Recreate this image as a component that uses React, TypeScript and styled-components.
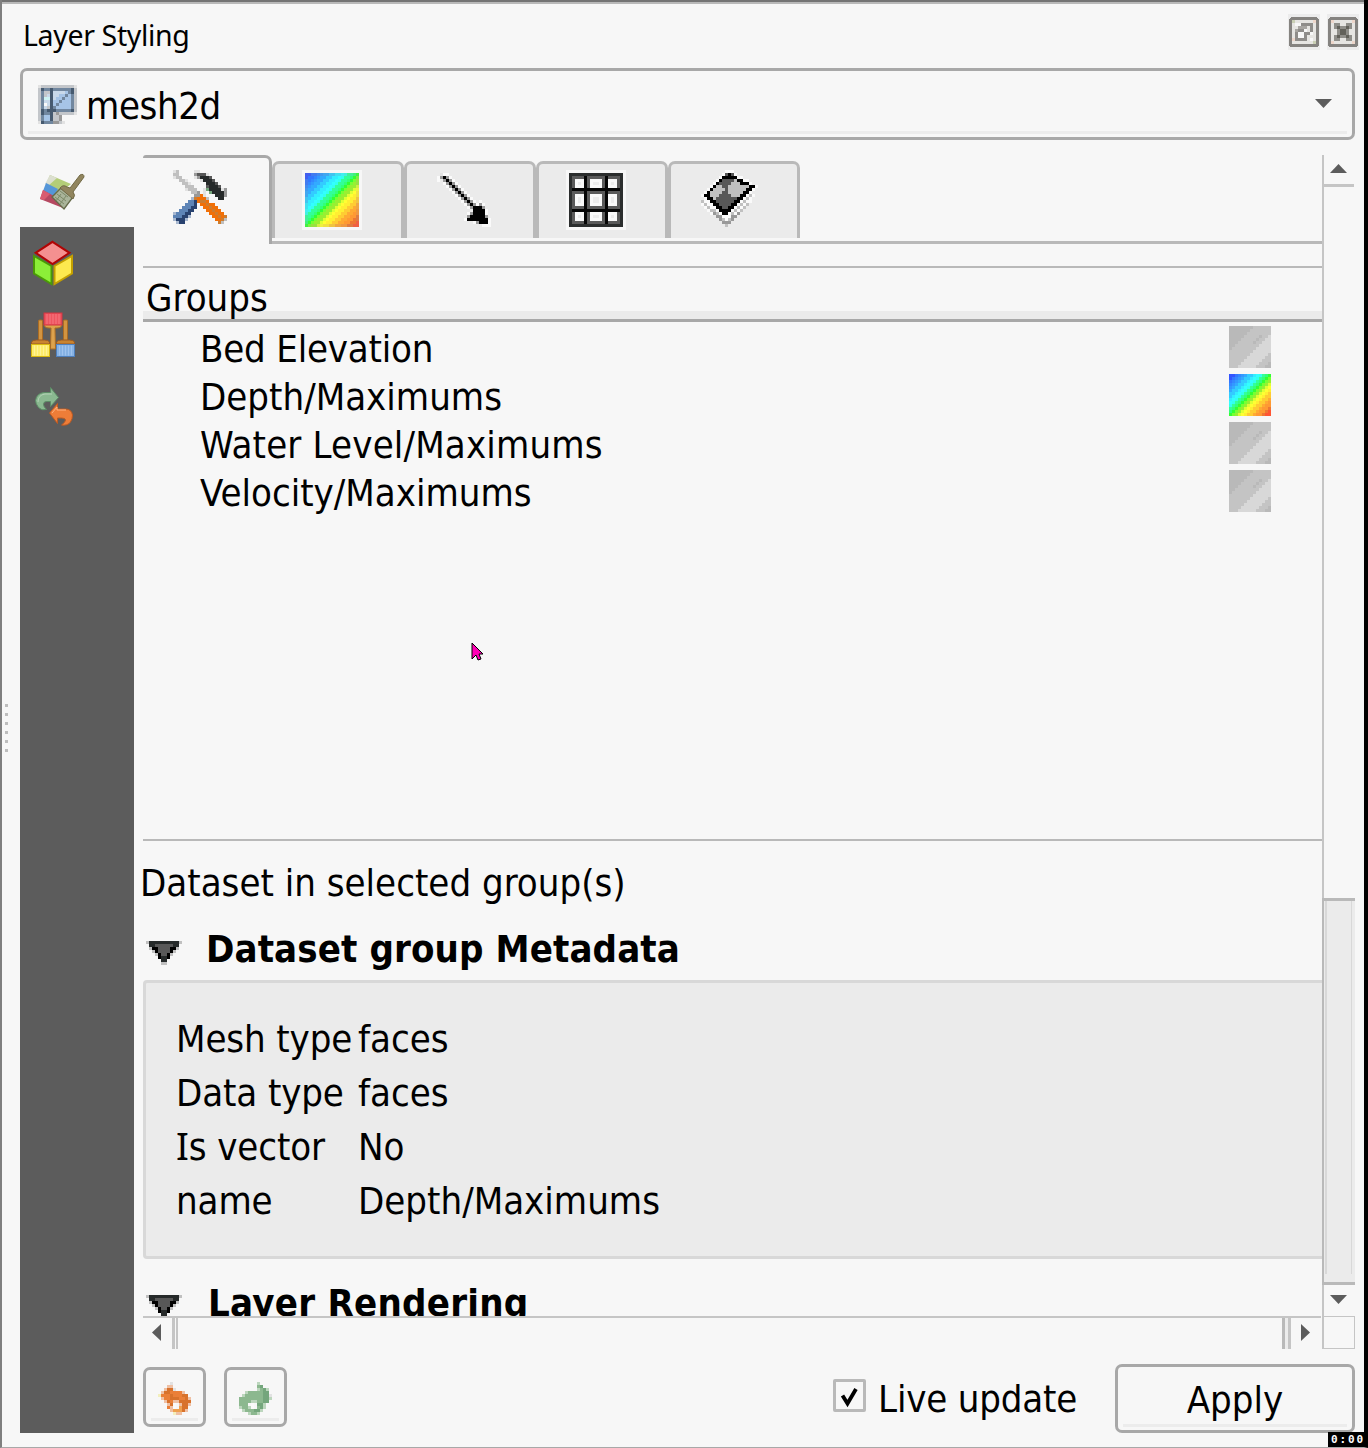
import React from "react";
import styled, { createGlobalStyle } from "styled-components";

const UI = `"DejaVu Sans Condensed", "DejaVu Sans", "Liberation Sans", sans-serif`;

const GlobalStyle = createGlobalStyle`
  * { box-sizing: border-box; }
  body { margin: 0; background: #f7f7f7; color: #000; }
`;

const Window = styled.div`
  width: 1368px;
  height: 1448px;
  display: flex;
  flex-direction: column;
  position: relative;
  overflow: hidden;
  background: #f7f7f7;
  border-left: 2px solid #7f7f7f;
  border-right: 4px solid #000;
  border-bottom: 1px solid #a8a8a8;
  font: 38px/48px ${UI};
  white-space: nowrap;
`;

const TopEdge = styled.div`
  height: 4px;
  flex: none;
  background: #b9b9b9;
  border-top: 2px solid #747474;
`;

const TitleBar = styled.header`
  height: 64px;
  flex: none;
  display: flex;
  align-items: center;
  padding: 0 5px 8px 21px;
`;

const Title = styled.h1`
  flex: 1;
  margin: 0;
  padding-top: 6px;
  font: 400 28.5px/40px "Noto Sans", "Open Sans", sans-serif;
  letter-spacing: -0.35px;
`;

const TitleButton = styled.button`
  width: 32px;
  height: 38px;
  margin-left: 7px;
  padding: 0;
  border: 0;
  background: none;
  svg { display: block; }
`;

const Bevel = styled.span`
  height: 3px;
  flex: none;
  margin: 0 5px;
  align-self: stretch;
  background: #ececec;
`;

const Combo = styled.div`
  width: 1335px;
  height: 72px;
  flex: none;
  margin-left: 18px;
  padding-bottom: 3px;
  border: 3px solid #a8a8a8;
  border-radius: 7px;
  display: flex;
  flex-direction: column;
`;

const ComboValue = styled.div`
  flex: 1;
  display: flex;
  align-items: center;
  padding: 4px 20px 0 15px;
  svg:first-child { margin-right: 9px; margin-top: 2px; }
  svg:last-child { margin-left: auto; margin-top: 1px; }
`;

const ComboText = styled.span`
  padding-top: 5px;
  letter-spacing: -0.4px;
`;

const Body = styled.div`
  flex: 1;
  min-height: 0;
  display: flex;
  padding: 15px 9px 0 0;
`;

const Splitter = styled.div`
  width: 18px;
  flex: none;
  display: flex;
  flex-direction: column;
  gap: 6px;
  padding: 549px 0 0 3px;
`;

const Dot = styled.i`
  width: 3px;
  height: 3px;
  background: #bdbdbd;
`;

const Sidebar = styled.nav`
  width: 114px;
  flex: none;
  height: 1278px;
  display: flex;
  flex-direction: column;
  background: #5c5c5c;
`;

const SidebarItem = styled.div<{ $active?: boolean }>`
  height: 72px;
  padding: ${(p) => (p.$active ? "16px 0 0 18px" : "12px 0 0 9px")};
  background: ${(p) => (p.$active ? "#f7f7f7" : "transparent")};
  svg { display: block; }
`;

const Main = styled.main`
  width: 1221px;
  flex: none;
  display: flex;
  flex-direction: column;
`;

const Viewport = styled.div`
  height: 1161px;
  flex: none;
  display: flex;
`;

const Content = styled.div`
  width: 1188px;
  flex: none;
  padding-left: 9px;
  overflow: hidden;
`;

const TabStrip = styled.div`
  display: flex;
  align-items: flex-end;
  height: 83px;
`;

const Tab = styled.div<{ $icon: number }>`
  width: 132px;
  height: 77px;
  padding: 6px 0 0 ${(p) => p.$icon}px;
  background: #ebebeb;
  border: 3px solid #b9b9b9;
  border-bottom: 0;
  border-radius: 7px 7px 0 0;
  svg { display: block; }
`;

const ActiveTab = styled.div`
  width: 129px;
  height: 89px;
  margin-bottom: -6px;
  padding: 12px 0 0 30px;
  border: 3px solid #a8a8a8;
  border-width: 3px 3px 0 0;
  border-radius: 3px 7px 0 0;
  svg { display: block; }
`;

const TabBase = styled.div`
  height: 6px;
  margin-left: 128px;
  border-bottom: 3px solid #b9b9b9;
`;

const Tree = styled.section`
  height: 575px;
  margin-top: 22px;
  border: 2px solid #b9b9b9;
  border-width: 2px 0;
`;

const TreeHeader = styled.div`
  height: 54px;
  padding: 6px 0 0 3px;
  line-height: 48px;
  background: linear-gradient(#f7f7f7 43px, #ebebeb 43px);
  border-bottom: 3px solid #a8a8a8;
`;

const TreeRow = styled.div`
  height: 48px;
  display: flex;
  align-items: center;
  justify-content: space-between;
  padding: 1px 51px 0 57px;
  svg { display: block; }
`;

const TreeLabel = styled.span<{ $spacing?: number }>`
  padding-top: 4px;
  letter-spacing: ${(p) => p.$spacing ?? 0}px;
`;

const SectionLabel = styled.div`
  height: 83px;
  padding-top: 18px;
  margin-left: -3px;
`;

const GroupTitle = styled.h2<{ $top: number; $gap: number; $spacing: number }>`
  height: 56px;
  margin: 0;
  padding-top: ${(p) => p.$top}px;
  display: flex;
  align-items: flex-start;
  gap: ${(p) => p.$gap}px;
  padding-left: 3px;
  font: 700 38px/48px ${UI};
  letter-spacing: ${(p) => p.$spacing}px;
  svg { margin-top: 16px; flex: none; }
`;

const GroupBox = styled.div`
  height: 279px;
  padding: 32px 30px 0;
  background: #ebebeb;
  border: 3px solid #d8d8d8;
  border-right: 0;
  border-radius: 4px 0 0 4px;
`;

const Meta = styled.dl`
  margin: 0;
  display: grid;
  grid-template-columns: 182px 1fr;
  grid-auto-rows: 54px;
`;

const MetaName = styled.dt`
  letter-spacing: -0.12px;
`;

const MetaValue = styled.dd`
  margin: 0;
`;

const SlabI = styled.span`
  font-family: "Noto Sans", sans-serif;
  line-height: 1px;
`;

const VScroll = styled.div`
  width: 33px;
  flex: none;
  display: flex;
  flex-direction: column;
  border-left: 2px solid #c5c5c5;
`;

const VButton = styled.div<{ $end?: boolean }>`
  height: ${(p) => (p.$end ? 31 : 32)}px;
  flex: none;
  margin-right: 1px;
  padding: ${(p) => (p.$end ? 10 : 9)}px 0 0 6px;
  border-bottom: ${(p) => (p.$end ? "0" : "3px solid #c5c5c5")};
  svg { display: block; }
`;

const VTrack = styled.div`
  flex: 1;
`;

const VThumb = styled.div`
  height: 387px;
  flex: none;
  margin-left: -2px;
  display: flex;
  padding-bottom: 8px;
  background: #ebebeb;
  border: solid #b9b9b9;
  border-width: 3px 0 3px 2px;
  &::before {
    content: "";
    flex: 1;
    margin: 0 3px 0 1px;
    border: solid #d8d8d8;
    border-width: 0 1px 0 2px;
  }
`;

const HScroll = styled.div`
  height: 33px;
  flex: none;
  margin-left: 9px;
  display: flex;
`;

const HTrack = styled.div`
  width: 1178px;
  display: flex;
  justify-content: space-between;
  border-top: 2px solid #c5c5c5;
`;

const HButton = styled.div<{ $end?: boolean }>`
  display: flex;
  width: ${(p) => (p.$end ? 39 : 35)}px;
  padding: 6px 0 0 ${(p) => (p.$end ? 16 : 9)}px;
  border: solid #c5c5c5;
  border-width: 0;
  ${(p) =>
    p.$end
      ? "border-left: 3px solid #b9b9b9; background: linear-gradient(90deg, #ececec 3px, #c5c5c5 3px, #c5c5c5 6px, transparent 6px);"
      : "background: linear-gradient(90deg, transparent 29px, #c5c5c5 29px, #c5c5c5 32px, #f7f7f7 32px, #f7f7f7 33px, #c5c5c5 33px);"}
`;

const Corner = styled.div`
  width: 33px;
  height: 33px;
  margin-left: 1px;
  border: solid #c5c5c5;
  border-width: 1px 1px 1px 2px;
`;

const Footer = styled.footer`
  height: 98px;
  flex: none;
  display: flex;
  align-items: flex-start;
  padding: 15px 0 0 9px;
`;

const Button = styled.button<{ $width: number; $height: number }>`
  width: ${(p) => p.$width}px;
  height: ${(p) => p.$height}px;
  margin: ${(p) => (p.$width < 100 ? "3px 18px 0 0" : "0")};
  padding: 0 0 3px;
  display: flex;
  flex-direction: column;
  align-items: center;
  background: #f7f7f7;
  color: #000;
  border: 3px solid #a8a8a8;
  border-radius: 7px;
  font: 38px/48px ${UI};
`;

const ButtonFace = styled.span`
  flex: 1;
  display: flex;
  align-items: center;
  padding-top: 9px;
`;

const Check = styled.label`
  display: flex;
  align-items: center;
  gap: 12px;
  margin: 8px 38px 0 auto;
`;

const CheckBox = styled.span`
  width: 33px;
  height: 33px;
  margin-top: -4px;
  border: 3px solid #b9b9b9;
  border-radius: 2px;
  svg { display: block; }
`;

const CheckLabel = styled.span`
  padding-top: 3px;
  letter-spacing: -0.2px;
`;

const Pointer = styled.div`
  position: absolute;
  left: 469px;
  top: 642px;
  svg { display: block; }
`;

const Timer = styled.div`
  position: absolute;
  right: -4px;
  bottom: -1px;
  width: 40px;
  height: 16px;
  padding-left: 3px;
  background: #000;
  color: #fff;
  font: 700 11px/15px "DejaVu Sans Mono", monospace;
  letter-spacing: 1.9px;
`;

/* ---------- pixel icons ---------- */

type Paint = (x: number, y: number) => string | null;

function Pixels({ w, h, paint, size = 3 }: { w: number; h: number; paint: Paint; size?: number }) {
  const cells: React.ReactNode[] = [];
  for (let y = 0; y < h; y++)
    for (let x = 0; x < w; x++) {
      const c = paint(x, y);
      if (c) cells.push(<rect key={`${x}-${y}`} x={x} y={y} width={1} height={1} fill={c} />);
    }
  return (
    <svg width={w * size} height={h * size} viewBox={`0 0 ${w} ${h}`} shapeRendering="crispEdges">
      {cells}
    </svg>
  );
}

const PALETTE: Record<string, string> = {
  g: "#c0c0c0", l: "#e2e2e2", w: "#fafafa", s: "#999999", d: "#585858", k: "#262a2a",
  K: "#000000", o: "#f07008", p: "#cc7d30", b: "#5d84b6", n: "#28426f", m: "#a8b8d0",
  O: "#ea7f38", P: "#d8722c", q: "#efc0a4", y: "#f3efbd", Y: "#eea04f",
  G: "#8cb88f", H: "#74a67c", h: "#bcd6bd", c: "#c9d9ea", e: "#71879f", f: "#465a70",
  t: "#cdf3f3", v: "#a6c4e6", x: "#c3c6ca",
};

function Bitmap({ rows }: { rows: string[] }) {
  return <Pixels w={rows[0].length} h={rows.length} paint={(x, y) => PALETTE[rows[y][x]] ?? null} />;
}

const TOOLS = [
  "lg.....ll.........",
  "gg.....sdddl......",
  "lgg....lskkkd.....",
  "..ggl....lkkkd....",
  "...ggl.....kkkd...",
  "....ggg....dkkkd..",
  "....lggg..lHkkkkls",
  "......ggs.l.Hkkkks",
  ".......ssol...kkks",
  "......mpooog...kk.",
  ".....bbnoppo......",
  "....bbbn.oopoo....",
  "...bbbnn..oopoo...",
  "..bbbnn....oopoo..",
  "mbbbnn......oopoo.",
  "bbbnnm.......oopop",
  "mnnnm.........oopg",
  ".mnn...........pg.",
];

const ARROW = [
  "..................",
  ".lww..............",
  "wsKsw.............",
  "w.sKsw............",
  "..wsKsw...........",
  "...wsKsw..........",
  "....wsKsw.........",
  ".....wsKsw........",
  "......wsKsw.......",
  ".......wsKsw......",
  "........wsKsw.w...",
  ".........wsKswsw..",
  "..........wsKKKs..",
  "............KKKKw.",
  "..........wsKKKKw.",
  "..........sKKKKKs.",
  ".........wKKKKKKKw",
  "............wsKKKw",
  "...............www",
];

const MESH = [
  "lxxxxxxxxxxxl",
  "xfeefeeeeeefx",
  "xexxfccccvefx",
  "xexcfccvvevex",
  "xettfcvvevvex",
  "xeccfvvevvvex",
  "xewcfvevvvvex",
  "xecxfevvvvvex",
  "xfefffeeeeefx",
  "xfeefxsxxxxxl",
  "xevvfxxs.....",
  "xevvfxxs.....",
  "lfeeessxl....",
];

const UNDO = [
  "....l......",
  "...qq......",
  "..qPPl.....",
  ".qPPOOOOq..",
  "yOOOPOOOPP.",
  ".qOOPPPOOPq",
  "..qPOqqPPPP",
  "...qPw.qPPq",
  "...Oqw.YPP.",
  "....qYYYPq.",
  ".....yqq...",
];

const REDO = [
  "......h....",
  "......GH...",
  "......hGHh.",
  "..hGGGGGHH.",
  ".hGGGGGGHHl",
  "GGGGGGGGHHh",
  "GGGGhhGGHH.",
  "GGG.w.HHh..",
  "hGGhw.GHh..",
  ".hGGGHHh...",
  "...hGGh....",
];

const CONTOUR = [
  ".........www........",
  "........wdKdw.......",
  ".......wKKKKKww.....",
  "......wKddddgKKww...",
  ".....wKddddgggKKKw..",
  "....wKggddgggggggKKw",
  "...wKggggdggggggKKw.",
  "..wKggggddgggggKKw..",
  ".wKKgggddddgggKKwgw.",
  "..wKKgdddddddKKwgw..",
  ".gwwKKddddddKKwgww..",
  ".wgwwKKddddKKwgwg...",
  "..wgwwKKddKKwgwg....",
  "...wggwKKKKwgwg.....",
  "....wsgwKKwgws......",
  "......sswwwss.......",
  ".......sgwgs........",
  "........sss.........",
  ".........g..........",
  "....................",
];

const COLLAPSE = [
  "gkkkkkkkkkkg",
  ".kkddddddkk.",
  ".gKKddddKKg.",
  "..gKddddKg..",
  "...gKddKg...",
  "....KkkK....",
  ".....kk.....",
  ".....gg.....",
];

const RAMP = [
  "#3355ff", "#3355ff", "#3377ff", "#3388ff", "#3399ff", "#33aaff", "#33ccff", "#33ccff", "#33eeff",
  "#33ffff", "#33ffee", "#33ff99", "#33ff77", "#33ff33", "#77ff33", "#99ee33", "#ddff33", "#ffff33",
  "#ffee33", "#ffcc33", "#ffcc33", "#ffaa33", "#ff9933", "#ff9933", "#ee7733", "#ff5533", "#ff5533",
];

const rampSwatch: Paint = (x, y) => RAMP[x + y];

const rampTab: Paint = (x, y) => {
  if (x === 0 || y === 0 || x === 19 || y === 19) return "#f7f7f7";
  const i = Math.max(0, Math.min(26, Math.round(((x + y - 2) * 26) / 34)));
  const c = RAMP[i];
  if (x === 1 || y === 1 || x === 18 || y === 18)
    return `color-mix(in srgb, ${c} 84%, #999999)`;
  return c;
};

const graySwatch: Paint = (x, y) => {
  const d = x + y;
  if ((x === 10 && y === 3) || (x === 9 && y === 4) || (x === 8 && y === 5)) return "#b9b9b9";
  if (d <= 7) return "#b9b9b9";
  if (d < 16) return "#c4c4c4";
  if (d < 22) return "#d8d8d8";
  if (d < 25) return "#c4c4c4";
  return "#b9b9b9";
};

const gridTab: Paint = (x, y) => {
  const on = (...v: number[]) => v.includes(x) || v.includes(y);
  if (on(0, 19)) return "#f7f7f7";
  if (on(1, 18)) return "#2b2d2d";
  if (on(6, 13)) return "#060606";
  if (on(2, 7, 12, 17)) return "#5a5a5a";
  const mid = (v: number) => v === 4 || v === 9 || v === 10 || v === 15;
  return mid(x) && mid(y) ? "#ececec" : "#f9f9f9";
};

function Triangle({ dir }: { dir: "up" | "down" | "left" | "right" }) {
  const flat = dir === "up" || dir === "down";
  const points = { up: "0,9 8.5,0 17,9", down: "0,0 17,0 8.5,9", left: "9,0 9,17 0,8.5", right: "0,0 9,8.5 0,17" }[dir];
  return (
    <svg width={flat ? 17 : 9} height={flat ? 9 : 17}>
      <polygon points={points} fill="#5c5c5c" />
    </svg>
  );
}

function FloatIcon() {
  return (
    <svg width="32" height="38" viewBox="0 0 32 38" shapeRendering="crispEdges">
      <rect x="0" y="1" width="32" height="36" fill="#ececec" />
      <rect x="2.5" y="5.5" width="27" height="27" rx="2" fill="#e6e5e2" stroke="#858380" strokeWidth="3" />
      <path d="M7 10h6v3H7zM22 25h3v3h-3zM22 19h3v3h-3z" fill="#f7f7f7" />
      <path d="M4 7h3v3H4zM25 28h3v3h-3z" fill="#c9cfb4" />
      <path d="M25 7h3v3h-3zM4 25h3v3H4z" fill="#edd6ca" />
      <path d="M13 10h12v9h-3v3h-3v-3h3v-6h-9z" fill="#8f8d8a" />
      <path d="M10 13h9v3h-9z" fill="#a8a6a2" />
      <rect x="8.5" y="17.5" width="9" height="9" fill="#f7f7f7" stroke="#8f8d8a" strokeWidth="3" />
      <path d="M16 16h3v3h-3z" fill="#f7f7f7" />
      <path d="M7 16h3v3H7z" fill="#a8a6a2" />
    </svg>
  );
}

function CloseIcon() {
  return (
    <svg width="32" height="38" viewBox="0 0 32 38" shapeRendering="crispEdges">
      <rect x="0" y="1" width="32" height="36" fill="#ececec" />
      <rect x="2.5" y="5.5" width="27" height="27" rx="2" fill="#e6e5e2" stroke="#858380" strokeWidth="3" />
      <path d="M4 7h3v3H4zM25 7h3v3h-3zM25 28h3v3h-3zM4 28h3v3H4z" fill="#edd6ca" />
      <path d="M7 10h6v3h6v-3h6v6h-3v6h3v6h-6v-3h-6v3H7v-6h3v-6H7z" fill="#8f8e89" />
      <path d="M10 13h3v3h6v-3h3v3h-3v6h3v3h-3v-3h-6v3h-3v-3h3v-6h-3z" fill="#62615a" />
    </svg>
  );
}

function BrushIcon() {
  return (
    <svg width="48" height="42" viewBox="38 171 48 42">
      <path d="M50 175l21 9-15 12-10-12z" fill="#b3cd77" />
      <path d="M50 175l7 3-9 8-3-2z" fill="#dcdfd0" />
      <path d="M46 183l12 6-5 8-10-6z" fill="#5596d8" />
      <path d="M43 190l11 6 9 12-23-9z" fill="#b64861" />
      <path d="M43 190l7 4-6 6-4-1z" fill="#d95c70" />
      <path d="M52 197l9-9 12 9-9 12z" fill="#aab49a" stroke="#656a4a" strokeWidth="1.4" />
      <path d="M55 197l9 7M57 194l9 7M60 191l8 6M56 201l5-7M60 204l6-8" stroke="#7d8a68" strokeWidth="1" />
      <path d="M60 188q3-4 7-1l3 1 10-13q4-2 4 2L73 192q3 3 0 7z" fill="#91855e" stroke="#716945" strokeWidth="1" />
    </svg>
  );
}

function CubeIcon() {
  return (
    <svg width="48" height="48" viewBox="29 239 48 48">
      <path d="M52.500 241.800L69.500 252.800 52.500 264 35.700 252.800z" fill="#f49090" stroke="#b00404" strokeWidth="2" />
      <path d="M34 256l17.500 10v18L34 273.500z" fill="#8cee38" stroke="#4a9a06" strokeWidth="2" />
      <path d="M54.500 266L72 256v17.500L54.500 284z" fill="#fde94f" stroke="#c4a000" strokeWidth="2" />
    </svg>
  );
}

function BrushesIcon() {
  const bristles = (x: number, y: number, fill: string, line: string, top: string) => (
    <g>
      <rect x={x} y={y} width="18" height="12" fill={fill} stroke={line} />
      <path
        d={`M${x + 3} ${y + 1}v10M${x + 6} ${y + 1}v10M${x + 9} ${y + 1}v10M${x + 12} ${y + 1}v10M${x + 15} ${y + 1}v10`}
        stroke={top}
        strokeOpacity="0.7"
      />
    </g>
  );
  return (
    <svg width="48" height="48" viewBox="29 311 48 48">
      <rect x="38.500" y="320" width="4" height="22" rx="1" fill="#d29440" stroke="#aa6c24" />
      <rect x="63.500" y="320" width="4" height="22" rx="1" fill="#d29440" stroke="#aa6c24" />
      <path d="M31.500 344v-2q1-2 5-2h8q4 0 5 2v2zM56.500 344v-2q1-2 5-2h8q4 0 5 2v2z" fill="#c98430" stroke="#9a5a22" />
      <path d="M44 324h18q0 4-5 4h-2l.5 21h-5l.5-21h-2q-5 0-5-4z" fill="#dda24c" stroke="#aa6c24" />
      {bristles(44, 313, "#ee5560", "#cf3540", "#f88a8e")}
      {bristles(31.5, 344.5, "#fdec6c", "#d9b810", "#fff6a8")}
      {bristles(56.5, 344.5, "#86b2e4", "#4f80bd", "#a9cbf2")}
    </svg>
  );
}

function HistoryIcon() {
  return (
    <svg width="48" height="48" viewBox="29 383 48 48" strokeLinejoin="round">
      <path d="M50.500 387.500l8 10-8 9v-5h-4q-3 0-3 3 0 2 3 5-5 1.500-8-2-3-4-3-7 1-7 8-8h7z" fill="#8ab890" stroke="#5c8c66" strokeWidth="1" />
      <path d="M38 402q0-7 7-8h7" fill="none" stroke="#b2d2b5" />
      <path d="M57.500 403.500l-8 9.500 8 10.500v-5.500h4q4 0 4 2 0 2-4 5 6 1 9-3 2-3 2-7-1-6-7-6h-8z" fill="#ee7d38" stroke="#bd5a22" strokeWidth="1" />
      <path d="M52 413l5-6v3h9" fill="none" stroke="#ffb27e" />
    </svg>
  );
}

function CheckMark() {
  return (
    <svg width="27" height="27" viewBox="0 0 27 27">
      <path d="M6.500 13.500l5 8L20 7" fill="none" stroke="#000" strokeWidth="3.800" />
    </svg>
  );
}

function PointerIcon() {
  return (
    <svg width="14" height="20" viewBox="0 0 14 20">
      <path d="M1 1l11 11H8l2 5-3 1-2-5-4 4z" fill="#ff00b4" stroke="#000" />
    </svg>
  );
}

const GROUPS = [
  { name: "Bed Elevation", active: false, spacing: -0.2 },
  { name: "Depth/Maximums", active: true, spacing: 0 },
  { name: "Water Level/Maximums", active: false, spacing: 0.15 },
  { name: "Velocity/Maximums", active: false, spacing: 0 },
];

export default function App() {
  return (
    <>
      <GlobalStyle />
      <Window>
        <TopEdge />
        <TitleBar>
          <Title>Layer Styling</Title>
          <TitleButton><FloatIcon /></TitleButton>
          <TitleButton><CloseIcon /></TitleButton>
        </TitleBar>
        <Combo>
          <ComboValue>
            <Bitmap rows={MESH} />
            <ComboText>mesh2d</ComboText>
            <Triangle dir="down" />
          </ComboValue>
          <Bevel />
        </Combo>
        <Body>
          <Splitter>
            {[0, 1, 2, 3, 4, 5].map((i) => <Dot key={i} />)}
          </Splitter>
          <Sidebar>
            <SidebarItem $active><BrushIcon /></SidebarItem>
            <SidebarItem><CubeIcon /></SidebarItem>
            <SidebarItem><BrushesIcon /></SidebarItem>
            <SidebarItem><HistoryIcon /></SidebarItem>
          </Sidebar>
          <Main>
            <Viewport>
              <Content>
                <TabStrip>
                  <ActiveTab><Bitmap rows={TOOLS} /></ActiveTab>
                  <Tab $icon={27}><Pixels w={20} h={20} paint={rampTab} /></Tab>
                  <Tab $icon={30}><Bitmap rows={ARROW} /></Tab>
                  <Tab $icon={27}><Pixels w={20} h={20} paint={gridTab} /></Tab>
                  <Tab $icon={27}><Bitmap rows={CONTOUR} /></Tab>
                </TabStrip>
                <TabBase />
                <Tree>
                  <TreeHeader>Groups</TreeHeader>
                  {GROUPS.map((g) => (
                    <TreeRow key={g.name}>
                      <TreeLabel $spacing={g.spacing}>{g.name}</TreeLabel>
                      <Pixels w={14} h={14} paint={g.active ? rampSwatch : graySwatch} />
                    </TreeRow>
                  ))}
                </Tree>
                <SectionLabel>Dataset in selected group(s)</SectionLabel>
                <GroupTitle $top={1} $gap={24} $spacing={0.1}>
                  <Bitmap rows={COLLAPSE} />
                  Dataset group Metadata
                </GroupTitle>
                <GroupBox>
                  <Meta>
                    <MetaName>Mesh type</MetaName><MetaValue>faces</MetaValue>
                    <MetaName>Data type</MetaName><MetaValue>faces</MetaValue>
                    <MetaName><SlabI>I</SlabI>s vector</MetaName><MetaValue>No</MetaValue>
                    <MetaName>name</MetaName><MetaValue>Depth/Maximums</MetaValue>
                  </Meta>
                </GroupBox>
                <GroupTitle $top={20} $gap={26} $spacing={0.25}>
                  <Bitmap rows={COLLAPSE} />
                  Layer Rendering
                </GroupTitle>
              </Content>
              <VScroll>
                <VButton><Triangle dir="up" /></VButton>
                <VTrack />
                <VThumb />
                <VButton $end><Triangle dir="down" /></VButton>
              </VScroll>
            </Viewport>
            <HScroll>
              <HTrack>
                <HButton><Triangle dir="left" /></HButton>
                <HButton $end><Triangle dir="right" /></HButton>
              </HTrack>
              <Corner />
            </HScroll>
            <Footer>
              <Button $width={63} $height={60}>
                <ButtonFace><Bitmap rows={UNDO} /></ButtonFace>
                <Bevel />
              </Button>
              <Button $width={63} $height={60}>
                <ButtonFace><Bitmap rows={REDO} /></ButtonFace>
                <Bevel />
              </Button>
              <Check>
                <CheckBox><CheckMark /></CheckBox>
                <CheckLabel>Live update</CheckLabel>
              </Check>
              <Button $width={240} $height={69}>
                <ButtonFace>Apply</ButtonFace>
                <Bevel />
              </Button>
            </Footer>
          </Main>
        </Body>
        <Pointer><PointerIcon /></Pointer>
        <Timer>0:00</Timer>
      </Window>
    </>
  );
}
